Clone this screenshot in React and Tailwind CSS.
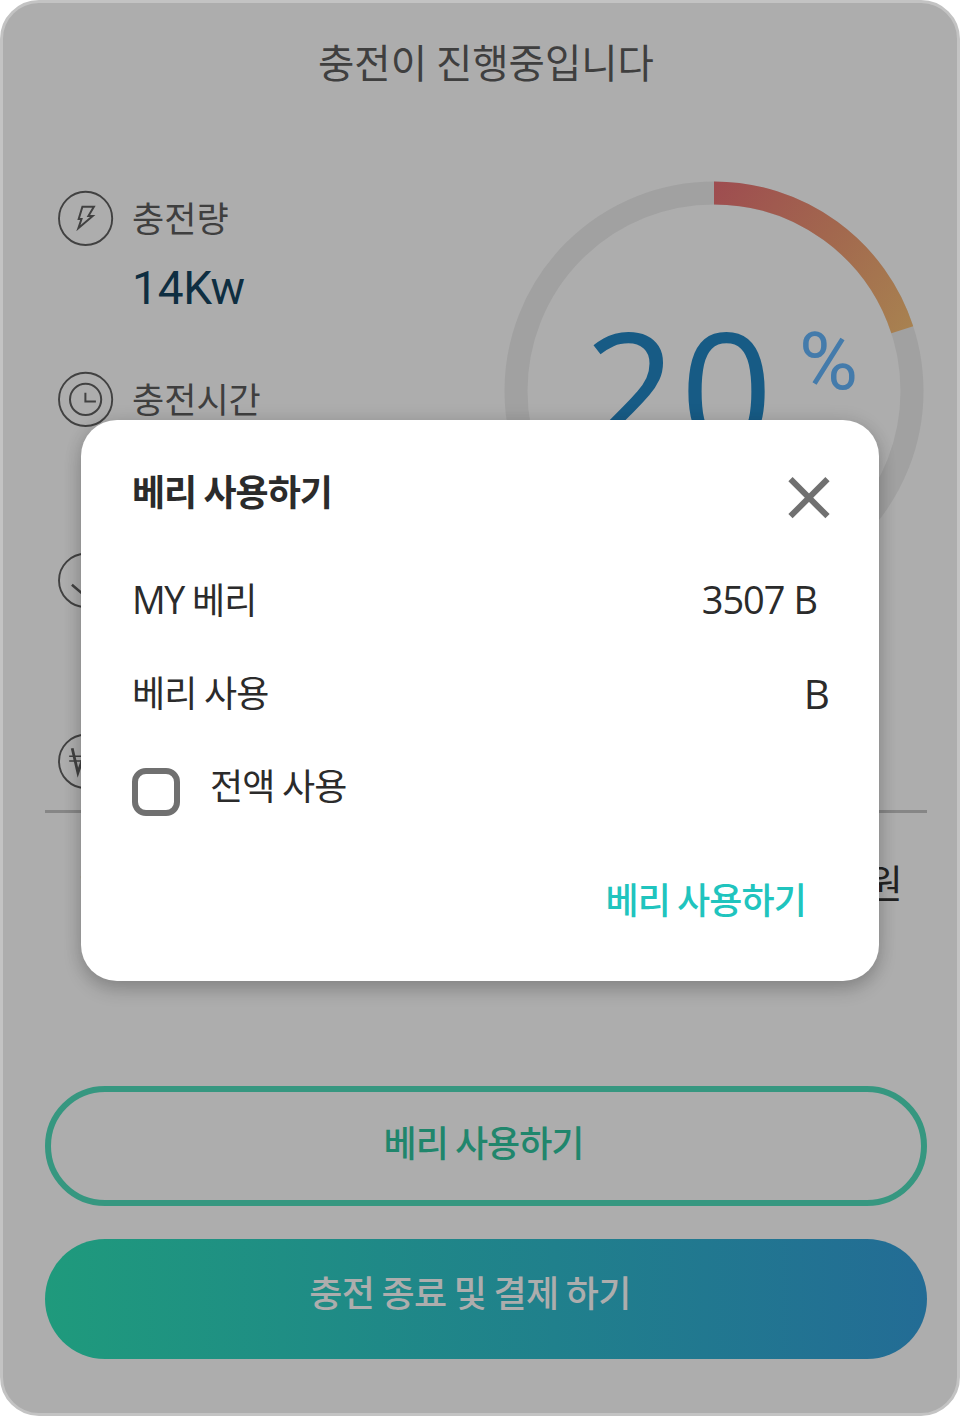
const kr = "font-['Noto_Sans_CJK_KR',sans-serif]";
const latin = "font-['Open_Sans','Noto_Sans_CJK_KR',sans-serif]";

function CircleIcon({ children }) {
  return (
    <svg width="56" height="56" viewBox="0.1 -0.7 56 56" fill="none" stroke="#414141" strokeWidth="2" className="shrink-0 overflow-visible">
      <circle cx="27.7" cy="27.7" r="26.6" strokeWidth="1.9" />
      {children}
    </svg>
  );
}

function Stat({ icon, label, value }) {
  return (
    <div className="h-[181px]">
      <div className="flex h-14 items-start gap-[18px]">
        <CircleIcon>{icon}</CircleIcon>
        <span className="text-[35px] leading-[53px] text-[#3f3f3f]">{label}</span>
      </div>
      {value && (
        <div className="pt-3.5 pl-[74px] font-['Roboto',sans-serif] text-[46px] leading-[56px] tracking-[-0.2px] text-[#0e2e41]">{value}</div>
      )}
    </div>
  );
}

function Gauge() {
  return (
    <div className="relative mt-[-9px] mr-[3px] h-[420px] w-[420px]">
      <svg width="420" height="420" viewBox="0 0 420 420" fill="none">
        <defs>
          <linearGradient id="arc" x1="210" y1="0" x2="409" y2="148" gradientUnits="userSpaceOnUse">
            <stop offset="0" stopColor="#9e4c50" />
            <stop offset="0.5" stopColor="#a2674e" />
            <stop offset="1" stopColor="#a88250" />
          </linearGradient>
        </defs>
        <circle cx="210" cy="210" r="198" stroke="#a1a1a1" strokeWidth="23" />
        <path d="M210 12A198 198 0 0 1 398.3 148.8" stroke="url(#arc)" strokeWidth="23" />
      </svg>
      <div className="absolute top-[105px] left-[80px] flex items-start">
        <span className={`${latin} w-[215px] text-[162px] leading-[200px] tracking-[3.5px] text-[#175b85]`}>20</span>
        <span className="pt-[28px] font-['Roboto',sans-serif] text-[80.5px] leading-[96px] text-[#447bab]">%</span>
      </div>
    </div>
  );
}

function Modal() {
  return (
    <div className="absolute top-[420px] left-[81px] h-[561px] w-[798px] rounded-[36px] bg-white pt-10 pr-[49px] pl-[51px] text-[36px] leading-[60px] tracking-[-0.8px] text-[#2b2b2b] shadow-[0_9px_18px_rgba(0,0,0,0.18),0_0_18px_rgba(0,0,0,0.1)]">
      <div className="flex h-[108px] items-start justify-between">
        <h2 className="font-bold tracking-[-1px]">베리 사용하기</h2>
        <svg width="42" height="42" viewBox="0 0 42 42" className="mt-[17px]" stroke="#707070" strokeWidth="6">
          <path d="M2.5 2.2L39.5 39.2M39.5 2.2L2.5 39.2" />
        </svg>
      </div>
      <div className="flex h-[93px] items-start justify-between pr-[13px]">
        <span><span className={`${latin} text-[37.5px] leading-[50px] tracking-[-1.5px]`}>MY </span>베리</span>
        <span className={`${latin} pt-px text-[38px] tracking-[-1px]`}>3507 B</span>
      </div>
      <div className="flex h-[93px] items-start justify-between">
        <span>베리 사용</span>
        <span className={`${latin} pt-[3px] pr-px text-[40.5px]`}>B</span>
      </div>
      <label className="flex h-[114px] items-start gap-[30px]">
        <span className="mt-3.5 h-12 w-12 rounded-[14px] border-[6px] border-[#707070]" />
        <span>전액 사용</span>
      </label>
      <div className="flex justify-end pr-[24px] font-medium tracking-[-0.9px] text-[#20c4be]">베리 사용하기</div>
    </div>
  );
}

export default function App() {
  return (
    <div className={`${kr} relative h-[1416px] w-[960px] overflow-hidden rounded-[39px] border-[3px] border-[#c3c3c3] bg-[#adadad] pr-[30px] pl-[42px] whitespace-nowrap`}>
      <h1 className="h-[187px] pt-[28px] text-center text-[39.5px] leading-[60px] text-[#3f3f3f]">충전이 진행중입니다</h1>
      <div className="flex h-[620px] justify-between pl-[13px]">
        <div>
          <Stat icon={<path d="M24.5 16H36L30.5 25.3H34.8L20.5 37.5L23.6 28.3H20.8Z" />} label="충전량" value="14Kw" />
          <Stat icon={<><circle cx="27.7" cy="27.7" r="15.6" /><path d="M27.5 21V29.7H38" /></>} label="충전시간" />
          <Stat icon={<path d="M14 32L28 44L42 32M28 12V44" strokeWidth="2.5" />} />
          <Stat icon={<><path d="M14.3 14.5L20 39L28 16L36 39L41.7 14.5" strokeWidth="2.8" /><path d="M11.3 22.5H44.7M11.3 27.2H44.7" strokeWidth="1.5" /></>} />
        </div>
        <Gauge />
      </div>
      <div className="h-[3px] bg-[#868686]" />
      <div className="flex h-[273px] items-start justify-between pt-[38px] pr-6 pl-[34.5px] text-[39px] leading-[60px] text-[#222222]">
        <span className="text-[36px] leading-[44px]">총</span>
        <span>원</span>
      </div>
      <button className="block h-[120px] w-full rounded-full border-[6px] border-[#369780] pr-[5px] pb-2.5 text-[36px] font-medium tracking-[-1px] text-[#20866c]">베리 사용하기</button>
      <button className="mt-[33px] block h-[120px] w-full rounded-full bg-linear-to-r from-[#1f9a7c] to-[#236c95] pr-8 pb-4 text-[36px] font-medium tracking-[-0.7px] text-[#adadad]">충전 종료 및 결제 하기</button>
      <div className="absolute -top-[3px] -left-[3px]">
        <Modal />
      </div>
    </div>
  );
}
